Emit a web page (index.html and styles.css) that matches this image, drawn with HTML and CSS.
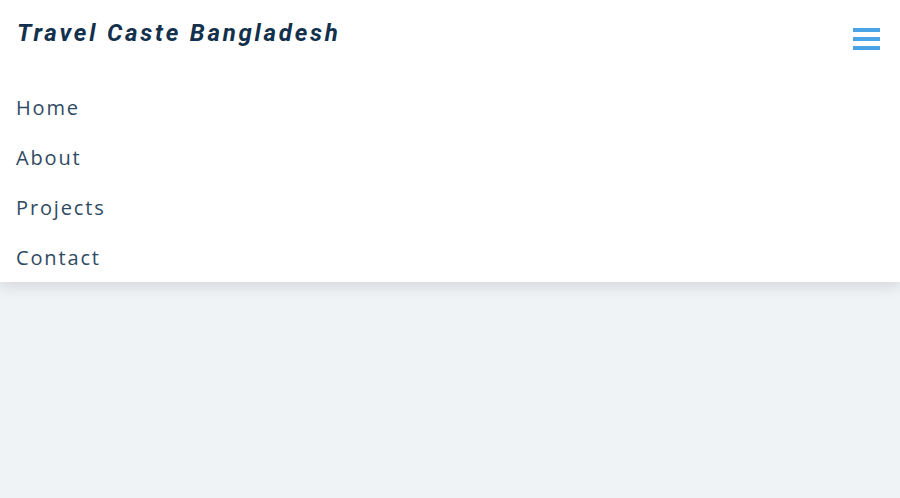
FILE: index.html
```html
<!DOCTYPE html>
<html>
<head>
<meta charset="utf-8">
<link rel="stylesheet" href="styles.css">
</head>
<body>
<header class="header">
  <div class="topbar">
    <h1 class="logo">Travel Caste Bangladesh</h1>
    <button class="menu-btn" aria-label="Menu">
      <span class="bar"></span><span class="bar"></span><span class="bar"></span>
    </button>
  </div>
  <nav class="nav">
    <a href="#" class="nav-link">Home</a>
    <a href="#" class="nav-link">About</a>
    <a href="#" class="nav-link">Projects</a>
    <a href="#" class="nav-link">Contact</a>
  </nav>
</header>
</body>
</html>
```

FILE: styles.css
```css
html, body {
  margin: 0;
  padding: 0;
}
body {
  background: #f0f3f6;
  height: 498px;
  overflow: hidden;
  font-family: "Open Sans", sans-serif;
}
.header {
  background: #ffffff;
  box-shadow: 0 4px 14px rgba(0, 0, 0, 0.12);
  height: 282px;
  display: flex;
  flex-direction: column;
  overflow: hidden;
}
.topbar {
  display: flex;
  justify-content: space-between;
  align-items: flex-start;
  padding: 0 20px 0 17px;
  height: 83px;
  flex-shrink: 0;
}
.logo {
  margin: 17px 0 0 0;
  font-family: Roboto, sans-serif;
  font-style: italic;
  font-weight: 700;
  font-size: 24px;
  line-height: 32px;
  letter-spacing: 2.8px;
  color: #13304d;
}
.menu-btn {
  margin-top: 28px;
  background: none;
  border: none;
  padding: 0;
  width: 27px;
  display: flex;
  flex-direction: column;
  gap: 5px;
  cursor: pointer;
}
.bar {
  display: block;
  width: 27px;
  height: 4px;
  background: #4aa3e6;
}
.nav {
  display: flex;
  flex-direction: column;
}
.nav-link {
  display: block;
  padding: 0 16px;
  height: 50px;
  line-height: 50px;
  font-size: 20px;
  letter-spacing: 1.85px;
  color: #2f4a63;
  text-decoration: none;
}
```
